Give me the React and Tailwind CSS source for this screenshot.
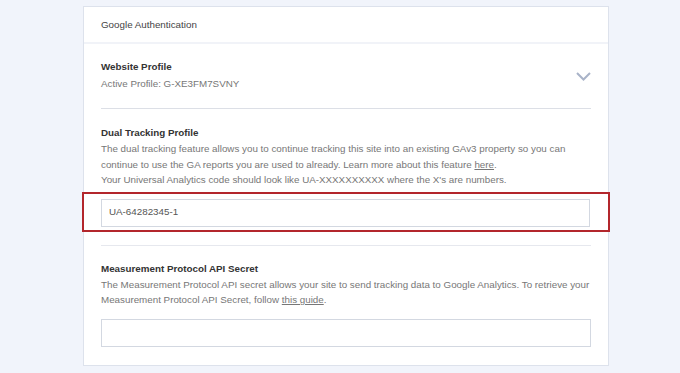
export default function App() {
  return (
    <div className="min-h-[373px] w-[680px] bg-[#f1f4fb] pt-[6px] font-['Liberation_Sans',Arial,sans-serif] text-[9.8px]">
      <div className="ml-[83px] w-[526px] border border-[#dde2ec] bg-white">
        <div className="border-b-2 border-[#f1f3f8] px-[17px] pt-[10px] pb-[9px] leading-[16px] text-[#444]">Google Authentication</div>

        <div className="px-[17px]">
          <div className="flex items-center justify-between border-b border-[#dcdfe6] pt-[15px] pb-[15px]">
            <div>
              <div className="leading-[16px] font-bold text-[#333]">Website Profile</div>
              <div className="leading-[18px] text-[#777]">Active Profile: G-XE3FM7SVNY</div>
            </div>
            <svg width="15" height="9" viewBox="0 0 15 9" fill="none" stroke="#a9b3c8" strokeWidth="2">
              <path d="M1 1l6.5 6.5L14 1" />
            </svg>
          </div>

          <div className="pt-[16px]">
            <div className="leading-[16px] font-bold text-[#333]">Dual Tracking Profile</div>
            <p className="whitespace-nowrap leading-[15.5px] text-[#777]">
              The dual tracking feature allows you to continue tracking this site into an existing GAv3 property so you can
              <br />
              continue to use the GA reports you are used to already. Learn more about this feature <a className="underline">here</a>.
              <br />
              Your Universal Analytics code should look like UA-XXXXXXXXXX where the X's are numbers.
            </p>
          </div>
        </div>

        <div className="mx-[-2px] mt-[4px] border-2 border-[#b3262c] pt-[5px] pr-[18px] pb-[3px] pl-[17px]">
          <div className="flex h-[28px] items-center border border-[#d3d8e1] px-[7px] text-[#555]">UA-64282345-1</div>
        </div>

        <div className="px-[17px]">
          <div className="mt-[13px] border-t border-[#e6e8ee] pt-[15px] pb-[18px]">
            <div className="leading-[16px] font-bold text-[#333]">Measurement Protocol API Secret</div>
            <p className="whitespace-nowrap leading-[15.5px] text-[#777]">
              The Measurement Protocol API secret allows your site to send tracking data to Google Analytics. To retrieve your
              <br />
              Measurement Protocol API Secret, follow <a className="underline">this guide</a>.
            </p>
            <div className="mt-[11px] h-[28px] border border-[#d3d8e1]"></div>
          </div>
        </div>
      </div>
    </div>
  );
}
